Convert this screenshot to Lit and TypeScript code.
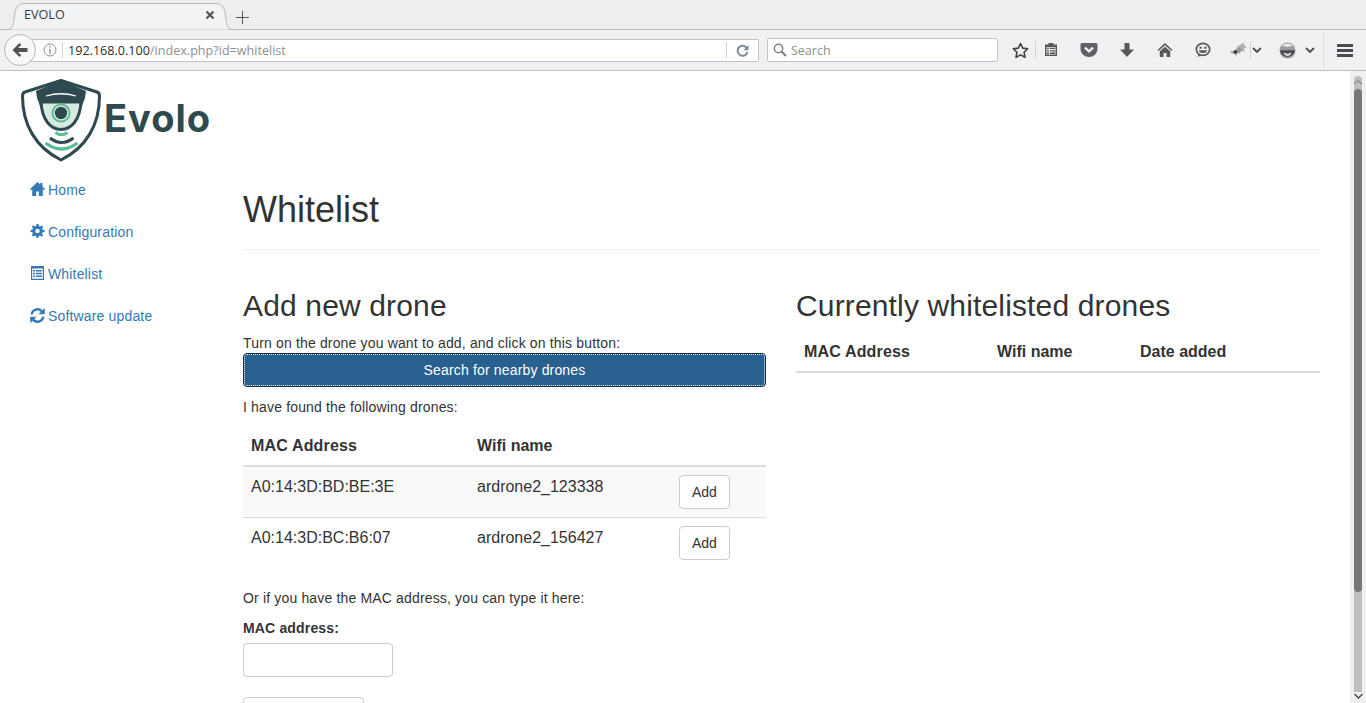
import { LitElement, html, css } from 'lit'
import { customElement } from 'lit/decorators.js'

const tools = [
  html`<svg width="16" height="16" viewBox="0 0 16 16"><path d="M5.500 2.500V1h5v1.500H14v11.500H2V2.500z" fill="#58595b"/><path d="M3.500 5h9v7.500h-9z" fill="#f0f1f3"/><path d="M4 5.800h8v1.300H4zM4 8.200h8v1.300H4zM4 10.600h8v1.300H4z" fill="#58595b"/><path d="M6 5.500h.9v7H6z" fill="#f0f1f3"/></svg>`,
  html`<svg width="18" height="16" viewBox="0 0 18 16"><path d="M2 1h14a1.500 1.500 0 0 1 1.500 1.500V7A8.500 8 0 0 1 .5 7V2.500A1.500 1.500 0 0 1 2 1z" fill="#606165"/><path d="M5 5.600l4 3.800 4-3.800" fill="none" stroke="#f0f1f3" stroke-width="2.400"/></svg>`,
  html`<svg width="16" height="16" viewBox="0 0 16 16"><path d="M5.500 1h5v6.500H15L8 15 1 7.500h4.500z" fill="#58595b"/></svg>`,
  html`<svg width="16" height="16" viewBox="0 0 16 16"><path d="M8 1L0.500 8l1 1L8 3.300 14.500 9l1-1z" fill="#58595b"/><path d="M8 4.800L2.800 9.300V15h3.700v-4h3v4h3.700V9.300z" fill="#58595b"/></svg>`,
  html`<svg width="16" height="16" viewBox="0 0 16 16"><ellipse cx="8" cy="7.300" rx="6.700" ry="6" fill="none" stroke="#58595b" stroke-width="1.700"/><path d="M3.500 12l-.8 3 3.500-1.700z" fill="#58595b"/><path d="M4.500 4.800h2.300v2H4.500zM9.200 4.800h2.300v2H9.200z" fill="#58595b"/><path d="M3.800 8.200h8.400c-.6 2-2.200 2.800-4.200 2.800s-3.600-.8-4.200-2.800z" fill="#58595b"/></svg>`,
]

@customElement('app-root')
export class AppRoot extends LitElement {
  static styles = css`
    :host {
      display: flex;
      flex-direction: column;
      width: 1366px;
      height: 703px;
      overflow: hidden;
      background: #fff;
      font-family: "Liberation Sans", Arial, sans-serif;
      font-size: 14px;
      line-height: 20px;
      color: #333;
    }
    svg { display: block; flex: none; }

    /* browser frame */
    .tabstrip {
      display: flex;
      align-items: flex-end;
      height: 30px;
      box-sizing: border-box;
      background: #eceef0;
      border-bottom: 1px solid #b9bcc0;
      padding-left: 4px;
    }
    .tab {
      position: relative;
      display: flex;
      align-items: center;
      justify-content: space-between;
      box-sizing: border-box;
      width: 231px;
      height: 29px;
      margin-bottom: -1px;
      padding: 0 20px 2px 20px;
      font: 12.600px "Open Sans", sans-serif;
      color: #3a3a3a;
    }
    .tab > svg.shape { position: absolute; left: 0; top: 0; }
    .tab span, .tab .close { position: relative; }
    .newtab { margin: 0 0 5px 1px; }
    .toolbar {
      display: flex;
      align-items: center;
      height: 40px;
      flex: none;
      box-sizing: border-box;
      background: #f0f1f3;
      font: 12.600px "Open Sans", sans-serif;
    }
    .back {
      display: flex;
      align-items: center;
      justify-content: center;
      flex: none;
      box-sizing: border-box;
      width: 32px;
      height: 32px;
      margin-left: 4px;
      border: 1px solid #b4b7bb;
      border-radius: 50%;
      background: #f8f8f9;
      z-index: 1;
    }
    .urlbar {
      display: flex;
      align-items: center;
      box-sizing: border-box;
      width: 734px;
      height: 23px;
      margin-left: -11px;
      padding: 0 9px 0 18px;
      background: #fff;
      border: 1px solid #c0c3c7;
      border-left: 0;
      border-radius: 0 2px 2px 0;
    }
    .sep { width: 1px; height: 16px; background: #cfd1d4; margin: 0 5px; flex: none; }
    .sep.end { margin-right: 9px; }
    .host { color: #2b2b2b; }
    .path { color: #8f8f8f; flex: 1; }
    .search {
      display: flex;
      align-items: center;
      gap: 4px;
      box-sizing: border-box;
      width: 231px;
      height: 24px;
      margin-left: 8px;
      padding-left: 5px;
      background: #fff;
      border: 1px solid #c0c3c7;
      border-radius: 2px;
      color: #8f8f8f;
      font-size: 12.500px;
    }
    .tools { display: flex; align-items: center; }
    .slot { display: flex; justify-content: center; flex: none; }
    .slot.star { width: 30px; margin-left: 7px; }
    .slot.tool { width: 30px; margin-right: 8px; }
    .slot.bug { width: 24px; }
    .slot.chev { width: 12px; padding-left: 1px; justify-content: flex-start; }
    .slot.globe { width: 46px; }
    .slot.chev2 { width: 13px; justify-content: flex-start; }
    .slot.chev2 svg { margin-left: -5px; }
    .slot.menu { width: 42px; }
    .vsep { width: 1px; height: 18px; background: #cfd1d4; flex: none; }
    .vsep.tall { height: 36px; background: #dcdee0; }
    .rule { height: 1px; background: #b9bcc0; flex: none; }

    /* page */
    .viewport { display: flex; flex: 1; min-height: 0; }
    .page { display: flex; flex: 1; min-width: 0; overflow: hidden; letter-spacing: .16px; }
    .scrollbar {
      display: flex;
      flex-direction: column;
      align-items: center;
      width: 16px;
      flex: none;
      padding-top: 5px;
      box-sizing: border-box;
      background: #eff0f2;
    }
    .track {
      display: flex;
      flex-direction: column;
      width: 8px;
      height: 616px;
      flex: none;
      border-radius: 4px 4px 0 0;
      background: #bcc0c3;
    }
    .arrow-up { margin-top: 3px; }
    .thumb { width: 8px; height: 503px; margin-top: 4px; border-radius: 4px; background: #77787b; }
    .arrow-down { margin-top: 1px; }

    .side { width: 243px; flex: none; padding-top: 8px; box-sizing: border-box; }
    .logo { display: flex; align-items: center; margin-left: 21px; height: 85px; }
    .logo-text {
      font: 700 38px/1 Inter, sans-serif;
      color: #2e4a4f;
      margin: 0 0 7px 1px;
      letter-spacing: 1px;
    }
    nav { margin-top: 6px; }
    nav a {
      display: flex;
      align-items: center;
      gap: 3px;
      margin-bottom: 2px;
      padding: 10px 15px 10px 30px;
      color: #337ab7;
    }
    nav a svg { margin-bottom: 2px; }

    main { flex: 1; min-width: 0; padding-right: 30px; }
    h1 {
      font-size: 36px;
      font-weight: 500;
      line-height: 40px;
      letter-spacing: 0;
      margin: 0;
      padding: 119px 0 19px;
      border-bottom: 1px solid #eee;
    }
    .cols { display: flex; gap: 30px; margin-top: 39px; }
    .col { width: 523px; flex: none; }
    .col.right { width: 524px; }
    h2 { font-size: 30px; font-weight: 500; line-height: 33px; letter-spacing: .15px; margin: 0 0 11px; }
    p { margin: 0; }
    .primary {
      display: block;
      width: 100%;
      height: 34px;
      box-sizing: border-box;
      font: inherit;
      letter-spacing: inherit;
      color: #fff;
      background: #286090;
      border: 1px solid #122b40;
      border-radius: 4px;
      outline: 1px dotted #fff;
      outline-offset: -2px;
    }
    .found { margin-top: 10px; }
    table { width: 100%; border-collapse: collapse; margin-top: 9px; table-layout: fixed; letter-spacing: 0; }
    table.current { margin-top: -1px; }
    th { text-align: left; font-weight: 700; font-size: 16px; line-height: 23px; padding: 8px; border-bottom: 2px solid #ddd; }
    th.wide { letter-spacing: .16px; }
    td { font-size: 16px; line-height: 23px; padding: 8px; vertical-align: top; border-top: 1px solid #ddd; }
    tr:first-child td { border-top: 0; }
    tbody tr:nth-child(odd) { background: #f9f9f9; }
    .btn {
      display: block;
      box-sizing: border-box;
      height: 34px;
      padding: 6px 12px;
      font: 14px/20px "Liberation Sans", Arial, sans-serif;
      color: #333;
      background: #fff;
      border: 1px solid #ccc;
      border-radius: 4px;
    }
    .typed { margin-top: 20px; }
    label { display: block; font-weight: 700; margin-top: 10px; }
    input {
      display: block;
      box-sizing: border-box;
      width: 150px;
      height: 34px;
      margin-top: 5px;
      border: 1px solid #ccc;
      border-radius: 4px;
      background: #fff;
    }
    .submit { width: 121px; margin-top: 20px; }
  `

  render () {
    return html`
      <div class="tabstrip">
        <div class="tab">
          <svg class="shape" width="231" height="29" viewBox="0 0 231 29">
            <path d="M0 28.500h4C9 28.500 9 24 11 12 12 5 15 2.500 21 2.500h190c6 0 9 2.500 10 9.500 2 12 2 16.500 7 16.500h3" fill="#f2f3f5" stroke="#b4b7bb"/>
          </svg>
          <span>EVOLO</span>
          <svg class="close" width="10" height="10" viewBox="0 0 10 10"><path d="M1.500 1.500l7 7M8.500 1.500l-7 7" stroke="#555" stroke-width="2.200"/></svg>
        </div>
        <svg class="newtab" width="13" height="13" viewBox="0 0 13 13"><path d="M6.500 0v13M0 6.500h13" stroke="#555" stroke-width="1"/></svg>
      </div>
      <div class="toolbar">
        <div class="back">
          <svg width="16" height="14" viewBox="0 0 16 14"><path d="M7.500 0L0.500 7l7 7 1.800-1.800L6 9h9.500V5H6l3.300-3.200z" fill="#505155"/></svg>
        </div>
        <div class="urlbar">
          <svg width="14" height="14" viewBox="0 0 14 14"><circle cx="7" cy="7" r="6" fill="none" stroke="#8e8f92"/><path d="M6.300 3h1.400v1.400H6.300zM6.300 5.700h1.400V11H6.300z" fill="#8e8f92"/></svg>
          <div class="sep"></div>
          <span class="host">192.168.0.100</span><span class="path">/index.php?id=whitelist</span>
          <div class="sep end"></div>
          <svg width="13" height="13" viewBox="0 0 13 13"><path d="M10.700 3.800A5 5 0 1 0 11.500 8" fill="none" stroke="#7b8a97" stroke-width="2"/><path d="M12.500 1v5.300H7.300z" fill="#7b8a97"/></svg>
        </div>
        <div class="search">
          <svg width="14" height="14" viewBox="0 0 14 14"><circle cx="5.500" cy="5.500" r="4.200" fill="none" stroke="#7f8184" stroke-width="1.500"/><path d="M8.500 8.500l4.500 4.500" stroke="#7f8184" stroke-width="2.200"/></svg>
          <span>Search</span>
        </div>
        <div class="tools">
          <div class="slot star">
            <svg width="17" height="17" viewBox="0 0 17 17"><path d="M8.500 1.500l2.200 4.600 5 .7-3.600 3.500.9 5-4.500-2.400L4 15.300l.9-5L1.300 6.800l5-.7z" fill="none" stroke="#3f4043" stroke-width="1.600" stroke-linejoin="round"/></svg>
          </div>
          <div class="vsep"></div>
          ${tools.map(icon => html`<div class="slot tool">${icon}</div>`)}
          <div class="slot bug">
            <svg width="17" height="15" viewBox="0 0 17 15"><path d="M0 8.500l5-1.500 3-4 5.500-3 1 2.500L17 4l-3.500 2 1.500 3-4-1-1 3-2.500-1.500L6 14l-1.500-3.500L1.500 11z" fill="#b0b1b3"/><ellipse cx="5.500" cy="9" rx="2" ry="1.800" fill="#333436"/><path d="M7 7.500l3-2.500M8 9l4-3" stroke="#6a6b6e" stroke-width=".8"/></svg>
          </div>
          <div class="vsep"></div>
          <div class="slot chev">
            <svg width="10" height="6" viewBox="0 0 10 6"><path d="M1 1l4 4 4-4" fill="none" stroke="#4a4b4e" stroke-width="1.800"/></svg>
          </div>
          <div class="slot globe">
            <svg width="17" height="17" viewBox="0 0 17 17"><circle cx="8.500" cy="8.500" r="8" fill="#9c9da0"/><path d="M3 3.500c3-2.500 8-2.500 11 0-3 1.500-8 1.500-11 0z" fill="#eceded"/><path d="M1 8.200h15c-.5 4-3.500 6.500-7.500 6.500S1.500 12.200 1 8.200z" fill="#4b4c4f"/><path d="M4.500 10.500c2.500 1.500 5.500 1.500 8 0-.5 2.300-2 3.400-4 3.400s-3.500-1.100-4-3.400z" fill="#dedede"/></svg>
          </div>
          <div class="slot chev2">
            <svg width="10" height="6" viewBox="0 0 10 6"><path d="M1 1l4 4 4-4" fill="none" stroke="#4a4b4e" stroke-width="1.800"/></svg>
          </div>
          <div class="vsep tall"></div>
          <div class="slot menu">
            <svg width="16" height="13" viewBox="0 0 16 13"><path d="M0 0h16v3H0zM0 5h16v3H0zM0 10h16v3H0z" fill="#4a4b4e"/></svg>
          </div>
        </div>
      </div>
      <div class="rule"></div>

      <div class="viewport">
        <div class="page">
          <aside class="side">
            <div class="logo">
              <svg width="82" height="85" viewBox="0 0 82 85">
                <path d="M40 1.500L76 13Q78.500 14 78.500 17C78.500 45 66 68 40 81 14 68 1.500 45 1.500 17Q1.500 14 4 13z" fill="#fff" stroke="#2e4a4f" stroke-width="3" stroke-linejoin="round"/>
                <path d="M40 1.500L65 12 64 19 61 27H19L16 19 15 12z" fill="#2e4a4f"/>
                <path d="M25 17Q40 12.500 55 17" fill="none" stroke="#fff" stroke-width="1.300"/>
                <path d="M20 23H60C59 40 51 50.500 40 50.500S21 40 20 23z" fill="#d7e9e0" stroke="#2e4a4f" stroke-width="3"/>
                <path d="M19 20h42v4H19z" fill="#2e4a4f"/>
                <circle cx="40" cy="34" r="9.500" fill="#5bbd96"/>
                <circle cx="40" cy="34" r="7.500" fill="#e4f1ea"/>
                <circle cx="40" cy="34" r="6.200" fill="#2e4a4f"/>
                <path d="M34.500 53.500Q40.500 58 46.500 53.500" fill="none" stroke="#5bbd96" stroke-width="3"/>
                <path d="M29 59Q40.500 68 52.500 59" fill="none" stroke="#2e4a4f" stroke-width="3"/>
                <path d="M24.500 64Q40.500 76 56.500 64" fill="none" stroke="#5bbd96" stroke-width="3.200"/>
              </svg>
              <span class="logo-text">Evolo</span>
            </div>
            <nav>
              <a>
                <svg width="15" height="14" viewBox="0 0 15 14"><path d="M7.500 0L0 7l1 1.200 1.200-1V14h4V9.500h2.600V14h4V7.200l1.200 1L15 7l-2.500-2.300V1h-2.300v1.600z" fill="#337ab7"/></svg>
                Home
              </a>
              <a>
                <svg width="15" height="14" viewBox="-.5 0 15 14"><path d="M6 0h2l.4 2 1.300.5L11.400 1.400l1.300 1.300-1.100 1.700.5 1.300L14 6v2l-2 .4-.5 1.300 1.100 1.700-1.300 1.300-1.700-1.100-1.300.5L8 14H6l-.4-2-1.300-.5-1.700 1.100-1.300-1.300 1.100-1.700-.5-1.300L0 8V6l2-.4.500-1.300-1.100-1.700 1.300-1.300 1.700 1.100 1.300-.5zM7 4.800a2.200 2.200 0 1 0 0 4.400 2.200 2.200 0 0 0 0-4.400z" fill="#337ab7" fill-rule="evenodd"/></svg>
                Configuration
              </a>
              <a>
                <svg width="15" height="14" viewBox="-.5 0 15 14"><path d="M.5 0h13v14H.5zM1.700 2.500v10.300h10.600V2.500zM2.600 4h1.900v1.500H2.600zM5.400 4h6v1.500h-6zM2.600 6.800h1.900v1.500H2.600zM5.400 6.800h6v1.500h-6zM2.600 9.600h1.900v1.500H2.600zM5.400 9.600h6v1.500h-6z" fill="#337ab7" fill-rule="evenodd"/></svg>
                Whitelist
              </a>
              <a>
                <svg width="15" height="15" viewBox="1 1 12 12"><path d="M1.400 6.200A5.700 5.700 0 0 1 11 2.700L12.800 1v5H7.800l1.800-1.800A3.800 3.800 0 0 0 3.200 6.200zM12.600 7.800A5.700 5.700 0 0 1 3 11.300L1.200 13V8h5l-1.800 1.800a3.800 3.800 0 0 0 6.400-2z" fill="#337ab7"/></svg>
                Software update
              </a>
            </nav>
          </aside>
          <main>
            <h1>Whitelist</h1>
            <div class="cols">
              <section class="col">
                <h2>Add new drone</h2>
                <p>Turn on the drone you want to add, and click on this button:</p>
                <button class="primary">Search for nearby drones</button>
                <p class="found">I have found the following drones:</p>
                <table>
                  <colgroup><col style="width:226px"><col style="width:202px"><col></colgroup>
                  <thead><tr><th class="wide">MAC Address</th><th>Wifi name</th><th></th></tr></thead>
                  <tbody>
                    <tr><td>A0:14:3D:BD:BE:3E</td><td>ardrone2_123338</td><td><button class="btn">Add</button></td></tr>
                    <tr><td>A0:14:3D:BC:B6:07</td><td>ardrone2_156427</td><td><button class="btn">Add</button></td></tr>
                  </tbody>
                </table>
                <p class="typed">Or if you have the MAC address, you can type it here:</p>
                <label>MAC address:</label>
                <input type="text">
                <button class="btn submit"></button>
              </section>
              <section class="col right">
                <h2>Currently whitelisted drones</h2>
                <table class="current">
                  <colgroup><col style="width:193px"><col style="width:143px"><col></colgroup>
                  <thead><tr><th class="wide">MAC Address</th><th>Wifi name</th><th>Date added</th></tr></thead>
                </table>
              </section>
            </div>
          </main>
        </div>
        <div class="scrollbar">
          <div class="track">
            <svg class="arrow-up" width="8" height="6" viewBox="0 0 8 6"><path d="M.5 5L4 1.500 7.500 5" fill="none" stroke="#8f9194" stroke-width="1.500"/></svg>
            <div class="thumb"></div>
          </div>
          <svg class="arrow-down" width="9" height="6" viewBox="0 0 9 6"><path d="M.5 1l4 4 4-4" fill="none" stroke="#4a4b4e" stroke-width="1.500"/></svg>
        </div>
      </div>
    `
  }
}
